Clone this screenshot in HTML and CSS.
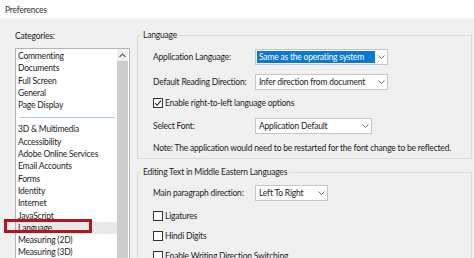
FILE: index.html
```html
<!DOCTYPE html>
<html lang="en">
<head>
  <meta charset="UTF-8" />
  <meta name="viewport" content="width=device-width, initial-scale=1.0" />
  <title>Preferences</title>
  <link rel="stylesheet" href="styles.css">
</head>
<body>
  <div class="titlebar">Preferences</div>

  <div class="window">
    <div class="categories">
      <div class="cat-label">Categories:</div>
      <div class="listbox">
        <ul class="items">
          <li>Commenting</li>
          <li>Documents</li>
          <li>Full Screen</li>
          <li>General</li>
          <li>Page Display</li>
          <li class="sep"></li>
          <li>3D &amp; Multimedia</li>
          <li>Accessibility</li>
          <li>Adobe Online Services</li>
          <li>Email Accounts</li>
          <li>Forms</li>
          <li>Identity</li>
          <li>Internet</li>
          <li>JavaScript</li>
          <li class="selected">Language</li>
          <li>Measuring (2D)</li>
          <li>Measuring (3D)</li>
        </ul>
        <div class="scrollbar">
          <div class="scroll-arrow">
            <svg width="7" height="5" viewBox="0 0 7 5"><path d="M0.5 4 L3.5 1 L6.5 4" fill="none" stroke="#606060" stroke-width="1.1"/></svg>
          </div>
          <div class="thumb"></div>
        </div>
      </div>
      <div class="callout"></div>
    </div>

    <div class="panel">
      <fieldset class="group first">
        <legend>Language</legend>
        <div class="row">
          <span class="label">Application Language:</span>
          <div class="select wide">
            <span class="value active">Same as the operating system</span>
            <span class="caret"><svg width="7" height="4" viewBox="0 0 7 4"><path d="M0.5 0.5 L3.5 3.5 L6.5 0.5" fill="none" stroke="#707070" stroke-width="1"/></svg></span>
          </div>
        </div>
        <div class="row gap-9">
          <span class="label">Default Reading Direction:</span>
          <div class="select wide">
            <span class="value">Infer direction from document</span>
            <span class="caret"><svg width="7" height="4" viewBox="0 0 7 4"><path d="M0.5 0.5 L3.5 3.5 L6.5 0.5" fill="none" stroke="#707070" stroke-width="1"/></svg></span>
          </div>
        </div>
        <div class="row gap-5">
          <span class="checkbox checked">
            <svg width="8" height="8" viewBox="0 0 8 8"><path d="M1 4.2 L3.1 6.3 L7 1.6" fill="none" stroke="#222" stroke-width="1.1"/></svg>
          </span>
          <span>Enable right-to-left language options</span>
        </div>
        <div class="row gap-7">
          <span class="label">Select Font:</span>
          <div class="select font">
            <span class="value">Application Default</span>
            <span class="caret"><svg width="7" height="4" viewBox="0 0 7 4"><path d="M0.5 0.5 L3.5 3.5 L6.5 0.5" fill="none" stroke="#707070" stroke-width="1"/></svg></span>
          </div>
        </div>
        <div class="row gap-6">
          <span class="note">Note: The application would need to be restarted for the font change to be reflected.</span>
        </div>
      </fieldset>

      <fieldset class="group second">
        <legend>Editing Text in Middle Eastern Languages</legend>
        <div class="row">
          <span class="label">Main paragraph direction:</span>
          <div class="select narrow">
            <span class="value">Left To Right</span>
            <span class="caret"><svg width="7" height="4" viewBox="0 0 7 4"><path d="M0.5 0.5 L3.5 3.5 L6.5 0.5" fill="none" stroke="#707070" stroke-width="1"/></svg></span>
          </div>
        </div>
        <div class="row gap-7">
          <span class="checkbox"></span>
          <span>Ligatures</span>
        </div>
        <div class="row gap-4">
          <span class="checkbox"></span>
          <span>Hindi Digits</span>
        </div>
        <div class="row gap-4">
          <span class="checkbox"></span>
          <span>Enable Writing Direction Switching</span>
        </div>
      </fieldset>
    </div>
  </div>
</body>
</html>
```

FILE: styles.css
```css
body {
  margin: 0;
  width: 474px;
  height: 258px;
  overflow: hidden;
  font-family: Lato, "Open Sans", sans-serif;
  font-size: 8.5px;
  letter-spacing: -0.2px;
  color: #1c1c1c;
  background: #f0f0f0;
}

.titlebar {
  height: 18px;
  line-height: 20px;
  padding-left: 5px;
  background: #fff;
  color: #333;
}

.window {
  display: flex;
  padding: 10px 0 0 15px;
  height: 230px;
}

.categories {
  position: relative;
  width: 115px;
  flex-shrink: 0;
}

.cat-label {
  margin-top: 2px;
  line-height: 12px;
}

.listbox {
  display: flex;
  margin-top: 6px;
  height: 220px;
  background: #fff;
  border: 1px solid #b4b4b4;
  border-bottom: none;
}

.items {
  flex: 1;
  list-style: none;
  margin: 0;
  padding: 1px 0 0 0;
}

.items li {
  height: 12.3px;
  line-height: 12.3px;
  padding-left: 2px;
  white-space: nowrap;
}

.items li.sep {
  height: 12px;
  position: relative;
}

.items li.sep::after {
  content: "";
  position: absolute;
  left: 4px;
  right: 2px;
  top: 6px;
  border-top: 1px solid #a9cbe6;
}

.items li.selected {
  background: #e9e9e9;
}

.scrollbar {
  width: 11px;
  display: flex;
  flex-direction: column;
  border-right: 1px solid #fff;
}

.scroll-arrow {
  height: 12px;
  display: flex;
  align-items: center;
  justify-content: center;
  background: #f0f0f0;
}

.thumb {
  flex: 1;
  background: #cdcdcd;
}

.callout {
  position: absolute;
  left: -11px;
  top: 191px;
  width: 82px;
  height: 8px;
  border: 3px solid #b3161d;
}

.panel {
  margin-left: 7px;
  flex: 1;
}

.group {
  margin: 0;
  width: 318px;
  padding: 7px 0 2px 15px;
  border: 1px solid #dadada;
}

.group legend {
  margin-left: -12px;
  padding: 0 2px;
  line-height: 14px;
}

.group.second {
  margin-top: 6px;
  padding-top: 6px;
}

.row {
  height: 16px;
  display: flex;
  align-items: center;
  white-space: nowrap;
}

.gap-4 {
  margin-top: 4px;
}

.gap-5 {
  margin-top: 5px;
}

.gap-6 {
  margin-top: 6px;
}

.gap-7 {
  margin-top: 7px;
}

.gap-9 {
  margin-top: 9px;
}

.label {
  width: 102px;
  flex-shrink: 0;
}

.select {
  height: 14px;
  display: flex;
  align-items: center;
  background: #fff;
  border: 1px solid #c6c6c6;
}

.select.wide {
  width: 131px;
}

.select.font {
  width: 115px;
}

.select.narrow {
  width: 71px;
}

.value {
  flex: 1;
  height: 12px;
  line-height: 12px;
  margin-left: 1px;
  padding-left: 2px;
  white-space: nowrap;
  overflow: hidden;
}

.value.active {
  background: #0a78d4;
  color: #fff;
}

.caret {
  width: 12px;
  display: flex;
  justify-content: center;
}

.checkbox {
  width: 8px;
  height: 8px;
  margin-right: 2px;
  border: 1px solid #333;
  background: #fff;
  display: flex;
  align-items: center;
  justify-content: center;
}
```
